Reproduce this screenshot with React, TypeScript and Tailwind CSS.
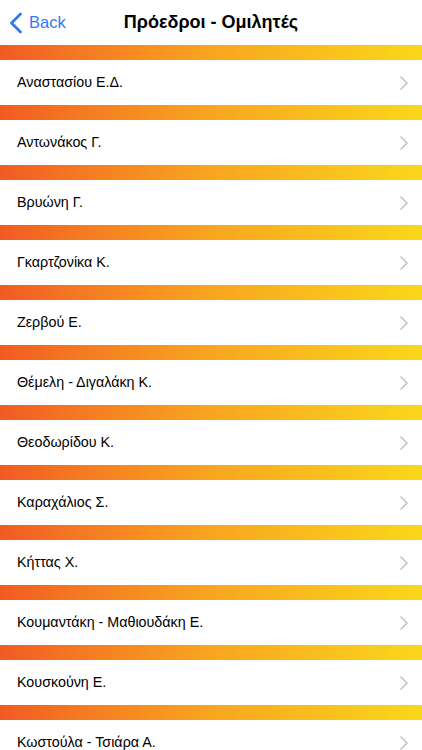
import { ChevronRight } from "lucide-react";

const speakers = [
  "Αναστασίου Ε.Δ.",
  "Αντωνάκος Γ.",
  "Βρυώνη Γ.",
  "Γκαρτζονίκα Κ.",
  "Ζερβού Ε.",
  "Θέμελη - Διγαλάκη Κ.",
  "Θεοδωρίδου Κ.",
  "Καραχάλιος Σ.",
  "Κήττας Χ.",
  "Κουμαντάκη - Μαθιουδάκη Ε.",
  "Κουσκούνη Ε.",
  "Κωστούλα - Τσιάρα Α.",
];

export default function App() {
  return (
    <div className="w-[422px] h-[750px] overflow-hidden bg-white font-['Liberation_Sans',Arial,sans-serif]">
      <header className="relative h-[45px] flex items-center justify-center">
        <button className="absolute left-[9px] top-0 h-[45px] flex items-center gap-[6px] text-[#3478f6]">
          <svg width="14" height="22" viewBox="0 0 14 22" fill="none">
            <polyline points="11.5,2 2.5,11 11.5,20" stroke="currentColor" strokeWidth="2.8" strokeLinecap="round" strokeLinejoin="round" />
          </svg>
          <span className="text-[16.5px]">Back</span>
        </button>
        <h1 className="text-[18px] font-bold text-black">Πρόεδροι - Ομιλητές</h1>
      </header>
      <ul>
        {speakers.map((name) => (
          <li key={name}>
            <div className="h-[15px] bg-gradient-to-r from-[#f15a22] via-[#f8a51f] to-[#f9d71a]" />
            <div className="h-[45px] flex items-center justify-between pl-[17px] pr-[6px]">
              <span className="text-[14.3px] text-black">{name}</span>
              <ChevronRight className="w-[24px] h-[24px] text-[#c4c4c9]" strokeWidth={1.7} />
            </div>
          </li>
        ))}
      </ul>
    </div>
  );
}
